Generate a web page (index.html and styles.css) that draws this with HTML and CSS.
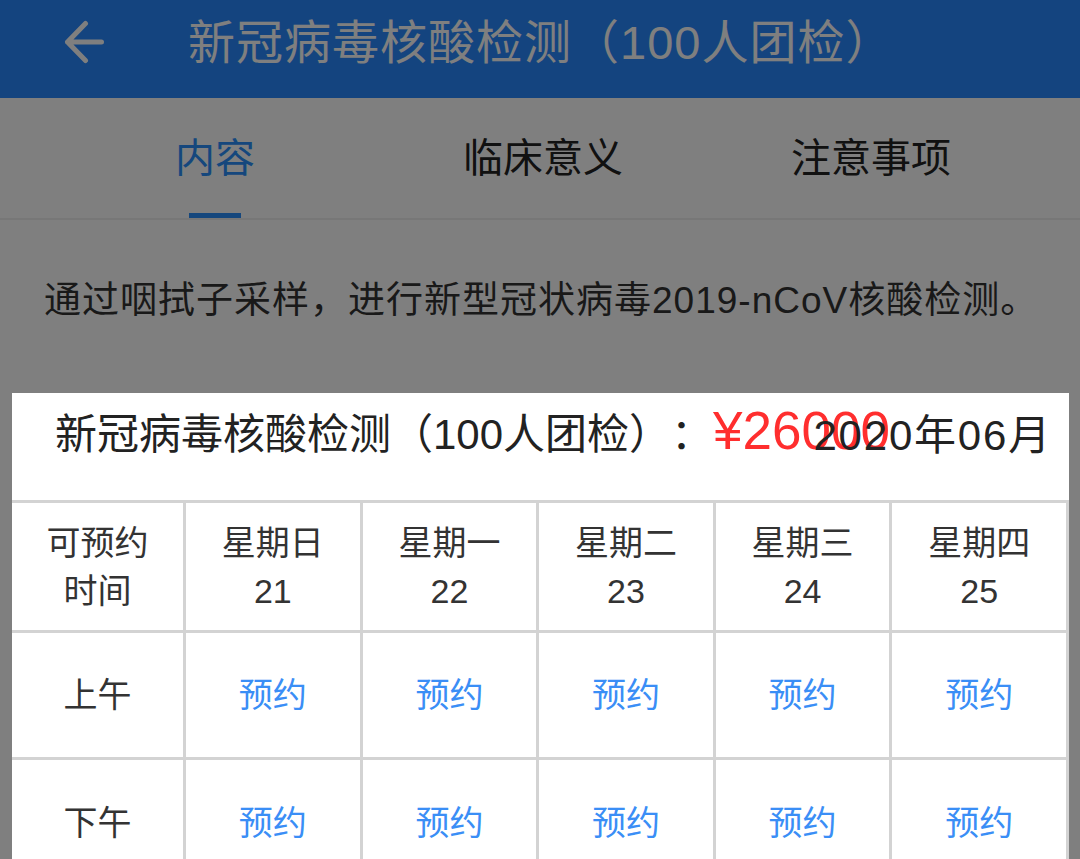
FILE: index.html
```html
<!DOCTYPE html>
<html lang="zh-CN">
<head>
<meta charset="utf-8">
<title>新冠病毒核酸检测（100人团检）</title>
<link rel="stylesheet" href="styles.css">
</head>
<body>
<div class="page">
  <header class="nav">
    <svg class="back" viewBox="0 0 44 44" aria-hidden="true">
      <path d="M39.5 22 H5.5 M23.5 3.5 L5.5 22 L23.5 40.5" fill="none" stroke="#fff" stroke-width="5" stroke-linecap="round" stroke-linejoin="round"/>
    </svg>
    <h1 class="nav-title">新冠病毒核酸检测（100人团检）</h1>
  </header>
  <nav class="tabs">
    <div class="tab active"><span class="tab-label">内容</span><i class="tab-bar"></i></div>
    <div class="tab"><span class="tab-label">临床意义</span></div>
    <div class="tab"><span class="tab-label">注意事项</span></div>
  </nav>
  <p class="desc">通过咽拭子采样，进行新型冠状病毒2019-nCoV核酸检测。</p>
</div>
<div class="mask"></div>
<section class="sheet">
  <div class="sheet-head">
    <span class="sheet-title">新冠病毒核酸检测（100人团检）：</span><span class="price">¥26000</span>
    <span class="month">2020年06月</span>
  </div>
  <div class="schedule">
    <div class="cell">可预约<br>时间</div>
    <div class="cell">星期日<br>21</div>
    <div class="cell">星期一<br>22</div>
    <div class="cell">星期二<br>23</div>
    <div class="cell">星期三<br>24</div>
    <div class="cell">星期四<br>25</div>
    <div class="cell">上午</div>
    <div class="cell book">预约</div>
    <div class="cell book">预约</div>
    <div class="cell book">预约</div>
    <div class="cell book">预约</div>
    <div class="cell book">预约</div>
    <div class="cell">下午</div>
    <div class="cell book">预约</div>
    <div class="cell book">预约</div>
    <div class="cell book">预约</div>
    <div class="cell book">预约</div>
    <div class="cell book">预约</div>
  </div>
</section>
</body>
</html>
```
FILE: styles.css
```css
html, body {
  margin: 0;
  padding: 0;
  background: #fff;
  font-family: "Liberation Sans", "Noto Sans CJK SC", sans-serif;
  text-spacing-trim: space-all;
  overflow: hidden;
}

.nav {
  height: 98px;
  box-sizing: border-box;
  padding: 0 0 14px 62px;
  display: flex;
  align-items: center;
  background: #2888fe;
}

.back {
  width: 44px;
  height: 44px;
  flex: none;
}

.nav-title {
  margin: 0 0 0 82px;
  font-size: 47px;
  font-weight: 400;
  line-height: 1;
  letter-spacing: 1px;
  color: #fff;
  white-space: nowrap;
}

.tabs {
  display: flex;
  justify-content: center;
  padding-left: 6px;
  height: 120px;
  border-bottom: 2px solid #eee;
  background: #fff;
}

.tab {
  width: 328px;
  box-sizing: border-box;
  padding-top: 40px;
  display: flex;
  flex-direction: column;
  align-items: center;
}

.tab-label {
  font-size: 40px;
  line-height: 40px;
  color: #222;
  white-space: nowrap;
}

.tab.active .tab-label {
  color: #2b8ffa;
}

.tab-bar {
  display: block;
  width: 52px;
  height: 5px;
  margin-top: 35px;
  background: #2b8ffa;
}

.desc {
  margin: 55px 0 0 44px;
  font-size: 37px;
  line-height: 52px;
  letter-spacing: 1px;
  color: #333;
  white-space: nowrap;
}

.mask {
  position: fixed;
  inset: 0;
  background: rgba(0, 0, 0, 0.5);
}

.sheet {
  position: fixed;
  left: 12px;
  top: 393px;
  width: 1057px;
  background: #fff;
}

.sheet-head {
  position: relative;
  height: 107px;
  box-sizing: border-box;
  padding: 16px 0 0 43px;
  font-size: 42px;
  line-height: 44px;
  white-space: nowrap;
}

.sheet-title {
  color: #222;
}

.price {
  font-size: 53px;
  color: #ff2e2e;
}

.month {
  position: absolute;
  right: 17px;
  top: 21px;
  letter-spacing: 1.8px;
  color: #222;
}

.schedule {
  display: grid;
  grid-template-columns: 171px repeat(5, 1fr);
  grid-template-rows: 127px 124px 125px;
  gap: 3px;
  padding: 3px 3px 0 0;
  background: #d3d3d3;
}

.cell {
  background: #fff;
  display: flex;
  align-items: center;
  justify-content: center;
  text-align: center;
  font-size: 34px;
  line-height: 48px;
  color: #333;
}

.cell.book {
  color: #3a8ef6;
}
```
